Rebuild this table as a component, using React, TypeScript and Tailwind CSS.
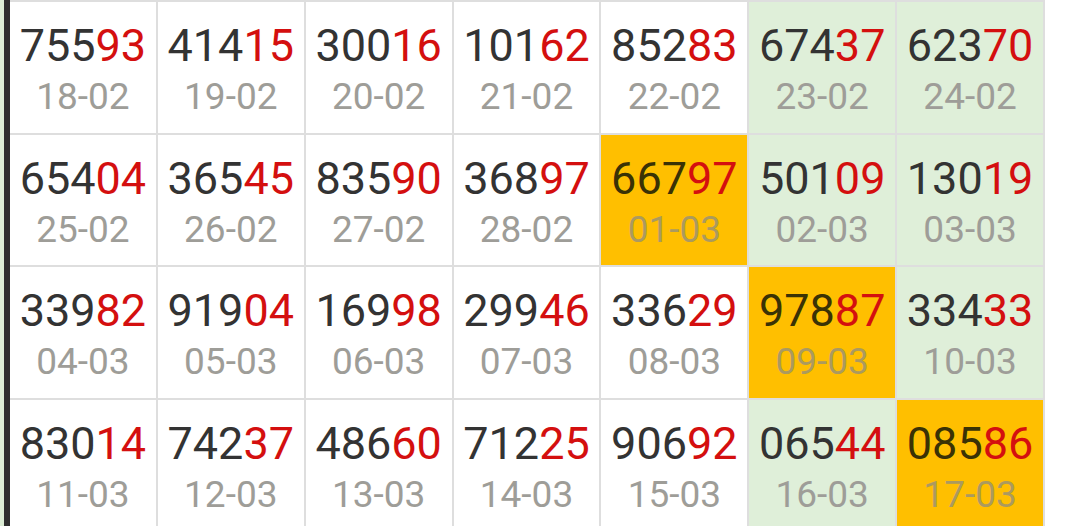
import React from "react";

type Kind = "w" | "g" | "o";
type Cell = { n: string; d: string; k: Kind };

const rows: Cell[][] = [
  [
    { n: "75593", d: "18-02", k: "w" },
    { n: "41415", d: "19-02", k: "w" },
    { n: "30016", d: "20-02", k: "w" },
    { n: "10162", d: "21-02", k: "w" },
    { n: "85283", d: "22-02", k: "w" },
    { n: "67437", d: "23-02", k: "g" },
    { n: "62370", d: "24-02", k: "g" },
  ],
  [
    { n: "65404", d: "25-02", k: "w" },
    { n: "36545", d: "26-02", k: "w" },
    { n: "83590", d: "27-02", k: "w" },
    { n: "36897", d: "28-02", k: "w" },
    { n: "66797", d: "01-03", k: "o" },
    { n: "50109", d: "02-03", k: "g" },
    { n: "13019", d: "03-03", k: "g" },
  ],
  [
    { n: "33982", d: "04-03", k: "w" },
    { n: "91904", d: "05-03", k: "w" },
    { n: "16998", d: "06-03", k: "w" },
    { n: "29946", d: "07-03", k: "w" },
    { n: "33629", d: "08-03", k: "w" },
    { n: "97887", d: "09-03", k: "o" },
    { n: "33433", d: "10-03", k: "g" },
  ],
  [
    { n: "83014", d: "11-03", k: "w" },
    { n: "74237", d: "12-03", k: "w" },
    { n: "48660", d: "13-03", k: "w" },
    { n: "71225", d: "14-03", k: "w" },
    { n: "90692", d: "15-03", k: "w" },
    { n: "06544", d: "16-03", k: "g" },
    { n: "08586", d: "17-03", k: "o" },
  ],
];

function CellView({ c }: { c: Cell }) {
  const bg = c.k === "o" ? "bg-[#ffbf00]" : c.k === "g" ? "bg-[#dfefd9]" : "bg-white";
  const dark = c.k === "o" ? "text-[#3a3205]" : "text-[#333333]";
  const date = c.k === "o" ? "text-[#ab9a5f]" : "text-[#9e9d98]";
  return (
    <div className={`${bg} flex flex-col items-center pt-[21px]`}>
      <div className="text-[45px] leading-none">
        <span className={dark}>{c.n.slice(0, 3)}</span>
        <span className="text-[#d40f0f]">{c.n.slice(3)}</span>
      </div>
      <div className={`${date} text-[37px] leading-none mt-[10px]`}>{c.d}</div>
    </div>
  );
}

export default function App() {
  return (
    <div
      className="w-[1079px] h-[526px] overflow-hidden bg-white flex"
      style={{ fontFamily: "Roboto, 'Noto Sans', sans-serif" }}
    >
      <div className="w-[4px] bg-[#dcedd5] shrink-0" />
      <div className="w-[6px] bg-[#2e2e2e] shrink-0" />
      <div className="w-[1035px] shrink-0 bg-[#dedede] pt-[2px] pr-[2px] grid grid-cols-7 gap-[2px] auto-rows-[130.5px] content-start">
        {rows.flat().map((c, i) => (
          <CellView key={i} c={c} />
        ))}
      </div>
    </div>
  );
}
